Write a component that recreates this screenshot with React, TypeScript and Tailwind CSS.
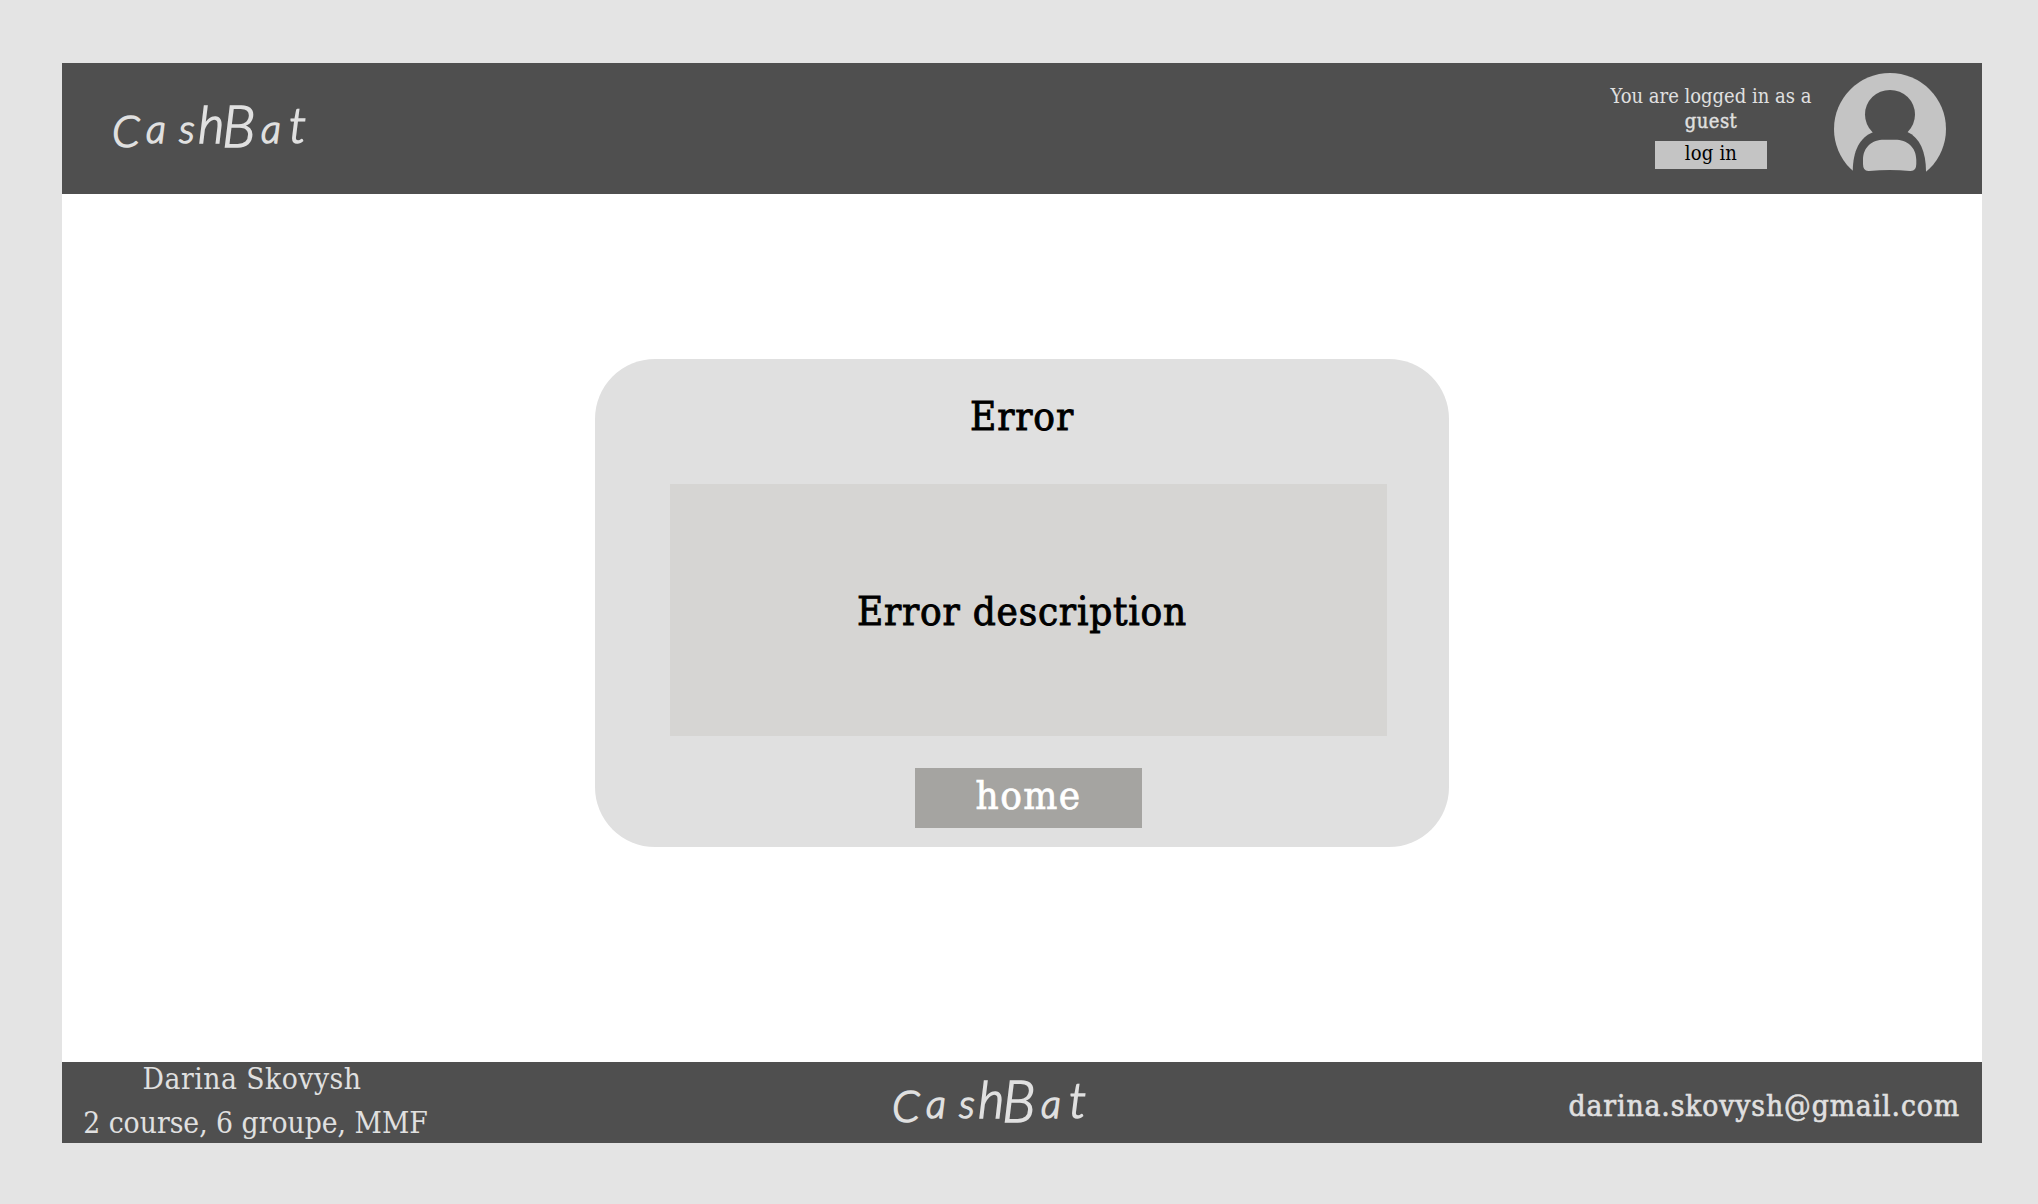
import React from "react";

function Logo() {
  return (
    <div className="flex items-baseline whitespace-nowrap font-['Lato',sans-serif] font-light italic leading-[60px] text-[#e0e0e0] [-webkit-text-stroke:1.5px]">
      <span className="w-[34px] translate-y-[4px] text-[44px]">C</span>
      <span className="w-[33px] text-[40px]">a</span>
      <span className="w-[19px] text-[40px]">s</span>
      <span className="w-[24px] text-[51px]">h</span>
      <span className="w-[39px] translate-y-[4px] text-[57px]">B</span>
      <span className="w-[28px] text-[40px]">a</span>
      <span className="w-[23px] text-[50px]">t</span>
    </div>
  );
}

function Avatar() {
  return (
    <svg className="h-[112px] w-[112px]" viewBox="0 0 112 112" aria-hidden="true">
      <circle cx="56" cy="56" r="56" fill="#c4c4c4" />
      <path
        d="M18.7 98C19.2 78 25 64.5 40 58.7H73C86 64.5 92 79 92 98.7V113H18.7Z"
        fill="#4f4f4f"
      />
      <ellipse cx="56" cy="41.5" rx="25" ry="24.6" fill="#4f4f4f" />
      <path
        d="M35 98Q29 98.5 29 91V87C29 74 38 66.7 50 66.7H61C73 66.7 82.3 74 82.3 87V91Q82.3 98.5 76 98Q56 96 35 98Z"
        fill="#c4c4c4"
      />
    </svg>
  );
}

export default function App() {
  return (
    <div className="h-[1204px] w-[2038px] overflow-hidden bg-[#e4e4e4] pl-[62px] pt-[63px] font-['DejaVu_Serif_Condensed','DejaVu_Serif',serif]">
      <div className="flex h-[1080px] w-[1920px] flex-col bg-white">
        <header className="flex h-[131px] shrink-0 bg-[#4f4f4f] pl-[50px] pr-[36px] text-[#e0e0e0]">
          <div className="pt-[28px]">
            <Logo />
          </div>
          <div className="ml-auto flex w-[222px] flex-col items-center whitespace-nowrap pt-[21px] text-[20px] leading-[25px]">
            <p>You are logged in as a</p>
            <p className="tracking-[0.5px] [-webkit-text-stroke:0.4px]">guest</p>
            <button className="mt-[7px] h-[28px] w-[112px] bg-[#c4c4c4] pb-[4px] leading-[24px] tracking-[0.2px] text-black">
              log in
            </button>
          </div>
          <div className="ml-[12px] pt-[10px]">
            <Avatar />
          </div>
        </header>

        <main className="flex-1 pl-[533px] pt-[165px]">
          <section className="h-[488px] w-[854px] rounded-[60px] bg-[#e0e0e0] text-[40px] text-black">
            <h1 className="h-[125px] pt-[27px] text-center leading-[60px] tracking-[0.9px] [-webkit-text-stroke:0.9px]">
              Error
            </h1>
            <div className="ml-[75px] flex h-[252px] w-[717px] items-center justify-center bg-[#d6d5d3] pr-[13px] pt-[2px]">
              <p className="tracking-[0.8px] [-webkit-text-stroke:0.9px]">Error description</p>
            </div>
            <button className="ml-[320px] mt-[32px] block h-[60px] w-[227px] bg-[#a5a4a1] pb-[5px] leading-[55px] tracking-[1.4px] text-white [-webkit-text-stroke:0.7px]">
              home
            </button>
          </section>
        </main>

        <footer className="flex h-[81px] shrink-0 bg-[#4f4f4f] text-[29.7px] text-[#e0e0e0]">
          <div className="-mt-[5px] w-[388px] whitespace-nowrap text-center leading-[44px]">
            <p className="pr-[8px] tracking-[0.5px]">Darina Skovysh</p>
            <p className="pr-[1px]">2 course, 6 groupe, MMF</p>
          </div>
          <div className="ml-[442px] pt-[4px]">
            <Logo />
          </div>
          <p className="ml-auto pr-[22px] pt-[3px] leading-[81px] tracking-[0.9px] [-webkit-text-stroke:0.6px]">
            darina.skovysh@gmail.com
          </p>
        </footer>
      </div>
    </div>
  );
}
